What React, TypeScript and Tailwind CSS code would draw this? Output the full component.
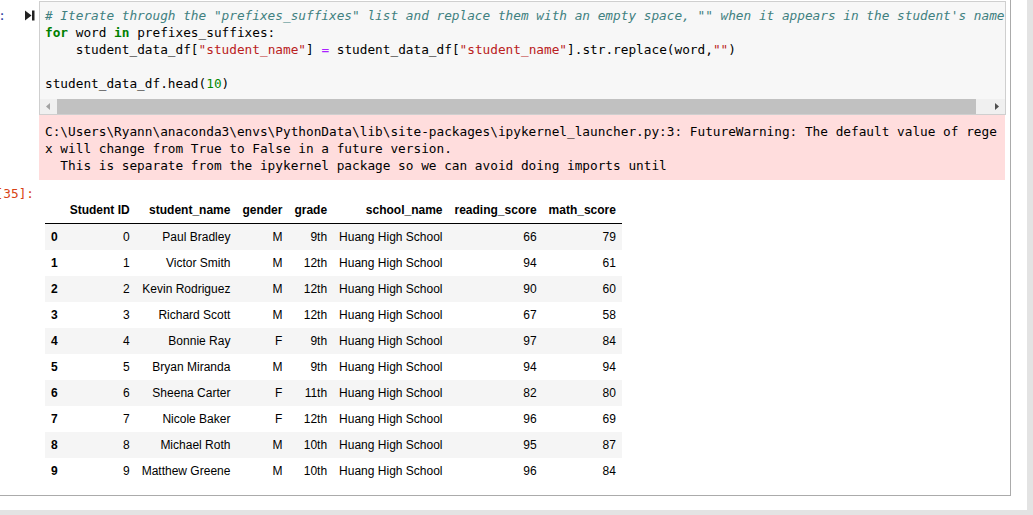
const mono = "font-['DejaVu_Sans_Mono',monospace] text-[12.75px] leading-[17px]";

const rows = [
  ["0", "Paul Bradley", "M", "9th", "66", "79"],
  ["1", "Victor Smith", "M", "12th", "94", "61"],
  ["2", "Kevin Rodriguez", "M", "12th", "90", "60"],
  ["3", "Richard Scott", "M", "12th", "67", "58"],
  ["4", "Bonnie Ray", "F", "9th", "97", "84"],
  ["5", "Bryan Miranda", "M", "9th", "94", "94"],
  ["6", "Sheena Carter", "F", "11th", "82", "80"],
  ["7", "Nicole Baker", "F", "12th", "96", "69"],
  ["8", "Michael Roth", "M", "10th", "95", "87"],
  ["9", "Matthew Greene", "M", "10th", "96", "84"],
];

const headers = ["Student ID", "student_name", "gender", "grade", "school_name", "reading_score", "math_score"];

function RunIcon() {
  return (
    <svg width="10" height="11" viewBox="0 0 10 11" className="ml-[19px] mt-[9px]">
      <path d="M0 0.5 L6.5 5.5 L0 10.5 Z" fill="#222" />
      <rect x="7" y="0.5" width="2.5" height="10" fill="#222" />
    </svg>
  );
}

function Scrollbar() {
  return (
    <div className="flex h-[15px] mt-[7px] bg-[#f0f0f0]">
      <div className="w-[16px] flex items-center justify-center">
        <svg width="4" height="7" viewBox="0 0 4 7">
          <path d="M4 0 L0 3.5 L4 7 Z" fill="#a3a3a3" />
        </svg>
      </div>
      <div className="ml-px w-[919px] bg-[#c1c1c1]" />
      <div className="flex-1" />
      <div className="w-[16px] flex items-center justify-center">
        <svg width="4" height="7" viewBox="0 0 4 7">
          <path d="M0 0 L4 3.5 L0 7 Z" fill="#505050" />
        </svg>
      </div>
    </div>
  );
}

export default function App() {
  return (
    <div className="w-[1033px] h-[515px] overflow-hidden bg-[#e3e3e3]">
      <div className="w-[1027px] h-[510px] bg-white">
        <div className="w-[1011px] h-[496px] border-r border-b border-[#ababab] pt-px">
          {/* input */}
          <div className="flex">
            <div className="w-[39px] shrink-0 flex items-start">
              <div className="w-[6px] flex justify-end overflow-hidden mt-[6px]">
                <span className={`${mono} whitespace-pre text-[#303f9f] shrink-0`}>In [35]:</span>
              </div>
              <RunIcon />
            </div>
            <div className="w-[967px] h-[114px] border border-[#cfcfcf] bg-[#f7f7f7] flex flex-col overflow-hidden">
              <pre className={`${mono} pt-[5px] pl-[5px] text-black whitespace-pre overflow-hidden`}>
                <span className="italic text-[#408080]">
                  # Iterate through the "prefixes_suffixes" list and replace them with an empty space, "" when it appears in the student's name
                </span>
                {"\n"}
                <span className="font-bold text-[#008000]">for</span> word <span className="font-bold text-[#008000]">in</span> prefixes_suffixes:{"\n"}
                {"    "}student_data_df[<span className="text-[#ba2121]">"student_name"</span>] <span className="text-[#aa22ff]">=</span> student_data_df[<span className="text-[#ba2121]">"student_name"</span>].str.replace(word,<span className="text-[#ba2121]">""</span>){"\n"}
                {"\n"}
                student_data_df.head(<span className="text-[#008800]">10</span>)
              </pre>
              <Scrollbar />
            </div>
          </div>

          {/* stderr */}
          <div className="flex">
            <div className="w-[39px] shrink-0" />
            <pre className={`${mono} w-[966px] h-[65px] bg-[#ffdddd] text-black pt-[8px] pl-[6px] whitespace-pre overflow-hidden`}>
              {"C:\\Users\\Ryann\\anaconda3\\envs\\PythonData\\lib\\site-packages\\ipykernel_launcher.py:3: FutureWarning: The default value of rege\n"}
              {"x will change from True to False in a future version.\n"}
              {"  This is separate from the ipykernel package so we can avoid doing imports until"}
            </pre>
          </div>

          {/* output */}
          <div className="flex">
            <div className="w-[34px] shrink-0 flex justify-end overflow-hidden mt-[5px] h-[17px]">
              <span className={`${mono} whitespace-pre text-[#d84315] shrink-0`}>Out[35]:</span>
            </div>
            <div className="ml-[11px] mt-[17px]">
              <table className="border-collapse font-['Liberation_Sans',Arial,sans-serif] text-[12px] leading-[14px] text-black">
                <thead>
                  <tr className="border-b border-black">
                    <th className="px-[6px] py-[6px]" />
                    {headers.map((h) => (
                      <th key={h} className="px-[6px] py-[6px] text-right font-bold">
                        {h}
                      </th>
                    ))}
                  </tr>
                </thead>
                <tbody>
                  {rows.map((r, i) => (
                    <tr key={r[0]} className={i % 2 === 0 ? "bg-[#f5f5f5]" : ""}>
                      <th className="px-[6px] py-[6px] text-left font-bold">{r[0]}</th>
                      <td className="px-[6px] py-[6px] text-right">{r[0]}</td>
                      <td className="px-[6px] py-[6px] text-right">{r[1]}</td>
                      <td className="px-[6px] py-[6px] text-right">{r[2]}</td>
                      <td className="px-[6px] py-[6px] text-right">{r[3]}</td>
                      <td className="px-[6px] py-[6px] text-right">Huang High School</td>
                      <td className="px-[6px] py-[6px] text-right">{r[4]}</td>
                      <td className="px-[6px] py-[6px] text-right">{r[5]}</td>
                    </tr>
                  ))}
                </tbody>
              </table>
            </div>
          </div>
        </div>
      </div>
    </div>
  );
}
